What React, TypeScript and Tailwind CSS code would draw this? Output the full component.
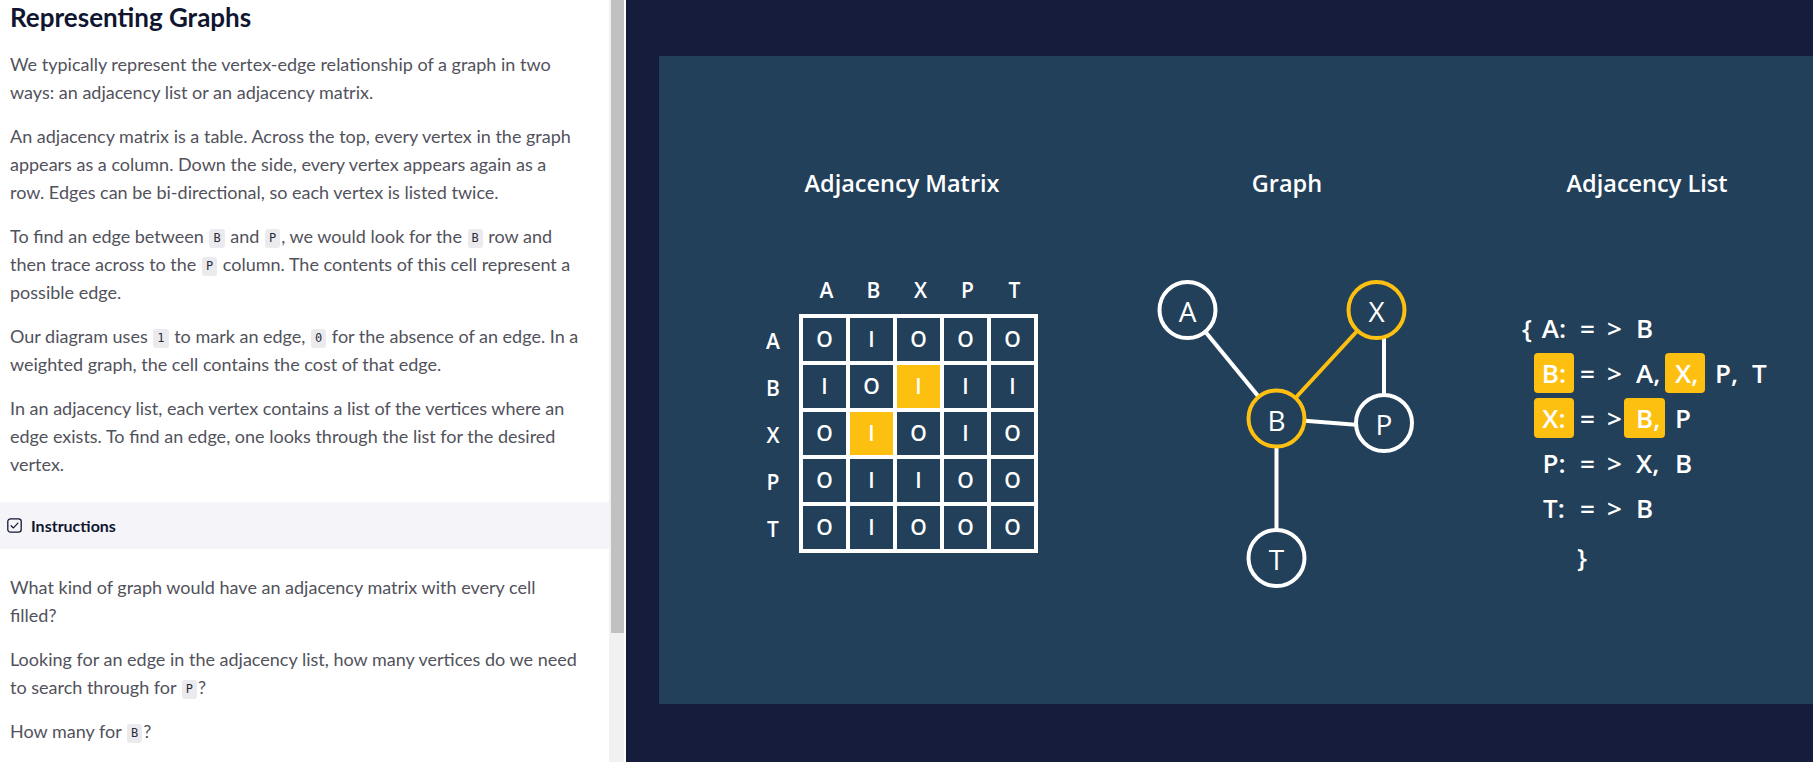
import React from "react";

const YELLOW = "#fdc010";

function Code({ children }: { children: React.ReactNode }) {
  return (
    <code className="mx-[1px] inline-block rounded-[3px] bg-[#ebebef] px-[4px] align-[1px] font-['DejaVu_Sans_Mono',monospace] text-[12px] leading-[19px] text-[#2b2b38]">
      {children}
    </code>
  );
}

function P({ children, className = "" }: { children: React.ReactNode; className?: string }) {
  return (
    <p className={"mb-[16px] whitespace-nowrap text-[18px] leading-[28px] text-[#52525c] " + className}>
      {children}
    </p>
  );
}

function LeftPane() {
  return (
    <div className="h-[762px] w-[609px] shrink-0 overflow-hidden bg-white font-['Lato','Open_Sans',sans-serif]">
      <div className="px-[10px] pt-[2px]">
        <h1 className="mb-[18px] text-[26px] font-bold leading-[30px] text-[#10162f]">Representing Graphs</h1>
        <P>
          We typically represent the vertex-edge relationship of a graph in two
          <br />
          ways: an adjacency list or an adjacency matrix.
        </P>
        <P>
          An adjacency matrix is a table. Across the top, every vertex in the graph
          <br />
          appears as a column. Down the side, every vertex appears again as a
          <br />
          row. Edges can be bi-directional, so each vertex is listed twice.
        </P>
        <P>
          To find an edge between <Code>B</Code> and <Code>P</Code>, we would look for the <Code>B</Code> row and
          <br />
          then trace across to the <Code>P</Code> column. The contents of this cell represent a
          <br />
          possible edge.
        </P>
        <P>
          Our diagram uses <Code>1</Code> to mark an edge, <Code>0</Code> for the absence of an edge. In a
          <br />
          weighted graph, the cell contains the cost of that edge.
        </P>
        <P className="!mb-[24px]">
          In an adjacency list, each vertex contains a list of the vertices where an
          <br />
          edge exists. To find an edge, one looks through the list for the desired
          <br />
          vertex.
        </P>
      </div>
      <div className="flex h-[47px] items-center gap-[9px] bg-[#f5f5f9] pl-[7px]">
        <svg width="15" height="15" viewBox="0 0 14 14" fill="none">
          <rect x="0.75" y="0.75" width="12.5" height="12.5" rx="2.5" stroke="#10162f" strokeWidth="1.2" />
          <path d="M3.8 7.2 L6 9.3 L10.2 4.8" stroke="#10162f" strokeWidth="1.1" strokeLinecap="round" strokeLinejoin="round" />
        </svg>
        <span className="text-[16px] font-bold text-[#10162f]">Instructions</span>
      </div>
      <div className="px-[10px] pt-[24px]">
        <P>
          What kind of graph would have an adjacency matrix with every cell
          <br />
          filled?
        </P>
        <P>
          Looking for an edge in the adjacency list, how many vertices do we need
          <br />
          to search through for <Code>P</Code>?
        </P>
        <P>
          How many for <Code>B</Code>?
        </P>
      </div>
    </div>
  );
}

function Scrollbar() {
  return (
    <div className="h-[762px] w-[17px] shrink-0 border-r-2 border-white bg-[#f1f1f1] pl-[2px]">
      <div className="h-[633px] w-[13px] bg-[#c1c1c1]" />
    </div>
  );
}

const LABELS = ["A", "B", "X", "P", "T"];
const MATRIX = [
  ["O", "I", "O", "O", "O"],
  ["I", "O", "I", "I", "I"],
  ["O", "I", "O", "I", "O"],
  ["O", "I", "I", "O", "O"],
  ["O", "I", "O", "O", "O"],
];

function Matrix() {
  return (
    <div className="ml-[88px] mt-[78px] font-['Open_Sans',sans-serif] font-semibold text-white">
      <div className="mb-[8px] flex h-[30px] pl-[56px]">
        {LABELS.map((l) => (
          <div key={l} className="flex w-[47px] items-center justify-center text-[21px]">
            {l}
          </div>
        ))}
      </div>
      <div className="flex">
        <div className="flex w-[52px] flex-col pt-[4px]">
          {LABELS.map((l) => (
            <div key={l} className="flex h-[47px] items-center justify-center text-[21px]">
              {l}
            </div>
          ))}
        </div>
        <div className="grid grid-cols-[repeat(5,43px)] gap-[4px] border-4 border-white bg-white">
          {MATRIX.map((row, r) =>
            row.map((v, c) => {
              const hl = (r === 1 && c === 2) || (r === 2 && c === 1);
              return (
                <div
                  key={r + "-" + c}
                  className={
                    "flex h-[43px] w-[43px] items-center justify-center text-[21px] font-semibold " +
                    (hl ? "bg-[#fdc010]" : "bg-[#22405a]")
                  }
                >
                  {v}
                </div>
              );
            })
          )}
        </div>
      </div>
    </div>
  );
}

function Graph() {
  const nodes: { id: string; x: number; y: number; hl?: boolean }[] = [
    { id: "A", x: 42.5, y: 40 },
    { id: "X", x: 231.5, y: 40, hl: true },
    { id: "B", x: 131.5, y: 148.5, hl: true },
    { id: "P", x: 239, y: 153 },
    { id: "T", x: 131.5, y: 288 },
  ];
  return (
    <svg width="284" height="330" viewBox="0 0 284 330" className="mt-[72px]">
      <line x1="42.5" y1="40" x2="131.5" y2="148.5" stroke="#ffffff" strokeWidth="4" />
      <line x1="131.5" y1="148.5" x2="231.5" y2="40" stroke={YELLOW} strokeWidth="4" />
      <line x1="239" y1="40" x2="239" y2="153" stroke="#ffffff" strokeWidth="4" />
      <line x1="131.5" y1="148.5" x2="239" y2="157" stroke="#ffffff" strokeWidth="4" />
      <line x1="131.5" y1="148.5" x2="131.5" y2="288" stroke="#ffffff" strokeWidth="4" />
      {nodes.map((n) => (
        <g key={n.id}>
          <circle cx={n.x} cy={n.y} r="28" fill="#22405a" stroke={n.hl ? YELLOW : "#ffffff"} strokeWidth="4" />
          <text
            x={n.x}
            y={n.y + 1}
            textAnchor="middle"
            dominantBaseline="central"
            fill="#ffffff"
            fontSize="28"
            fontWeight="400"
            fontFamily="'Open Sans', sans-serif"
          >
            {n.id}
          </text>
        </g>
      ))}
    </svg>
  );
}

function Box({ children, w, pl = 0, hl = false, center = false }: { children?: React.ReactNode; w: number; pl?: number; hl?: boolean; center?: boolean }) {
  return (
    <span
      className={
        "flex h-[40px] shrink-0 items-center rounded-[4px] " +
        (hl ? "bg-[#fdc010] " : "") +
        (center ? "justify-center " : "")
      }
      style={{ width: w, paddingLeft: pl }}
    >
      {children}
    </span>
  );
}

function ListRow({ cells, hl = [] as number[] }: { cells: string[]; hl?: number[] }) {
  const widths = [12, 40, 27, 23, 41, 40, 40, 40];
  const pls = [0, 0, 0, 4, 12, 10, 10, 7];
  return (
    <div className="flex h-[45px] items-center">
      {widths.map((w, i) => (
        <Box key={i} w={w} pl={pls[i]} hl={hl.includes(i)} center={i === 1 || i === 2 || i === 3}>
          {cells[i] ?? ""}
        </Box>
      ))}
    </div>
  );
}

function AdjList() {
  return (
    <div className="ml-[93px] mt-[107px] whitespace-pre font-['Open_Sans',sans-serif] text-[26px] font-semibold leading-none text-white">
      <ListRow cells={["{", "A:", "=", ">", "B"]} />
      <ListRow cells={["", "B:", "=", ">", "A,", "X,", "P,", "T"]} hl={[1, 5]} />
      <ListRow cells={["", "X:", "=", ">", "B,", "P"]} hl={[1, 4]} />
      <ListRow cells={["", "P:", "=", ">", "X,", "B"]} />
      <ListRow cells={["", "T:", "=", ">", "B"]} />
      <div className="mt-[4px] flex h-[45px] items-center pl-[55px]">{"}"}</div>
    </div>
  );
}

function Title({ children }: { children: React.ReactNode }) {
  return (
    <div className="text-center font-['Open_Sans',sans-serif] text-[23.5px] font-semibold leading-[30px] text-white">
      {children}
    </div>
  );
}

function RightPane() {
  return (
    <div className="h-[762px] flex-1 overflow-hidden bg-[#161c3b] pl-[33px] pt-[56px]">
      <div className="flex h-[648px] w-[1200px] bg-[#22405a] pt-[112px]">
        <div className="w-[486px] shrink-0">
          <Title>Adjacency Matrix</Title>
          <Matrix />
        </div>
        <div className="flex w-[284px] shrink-0 flex-col">
          <Title>Graph</Title>
          <Graph />
        </div>
        <div className="w-[436px] shrink-0">
          <Title>Adjacency List</Title>
          <AdjList />
        </div>
      </div>
    </div>
  );
}

export default function App() {
  return (
    <div className="flex h-[762px] w-[1813px] overflow-hidden">
      <LeftPane />
      <Scrollbar />
      <RightPane />
    </div>
  );
}
